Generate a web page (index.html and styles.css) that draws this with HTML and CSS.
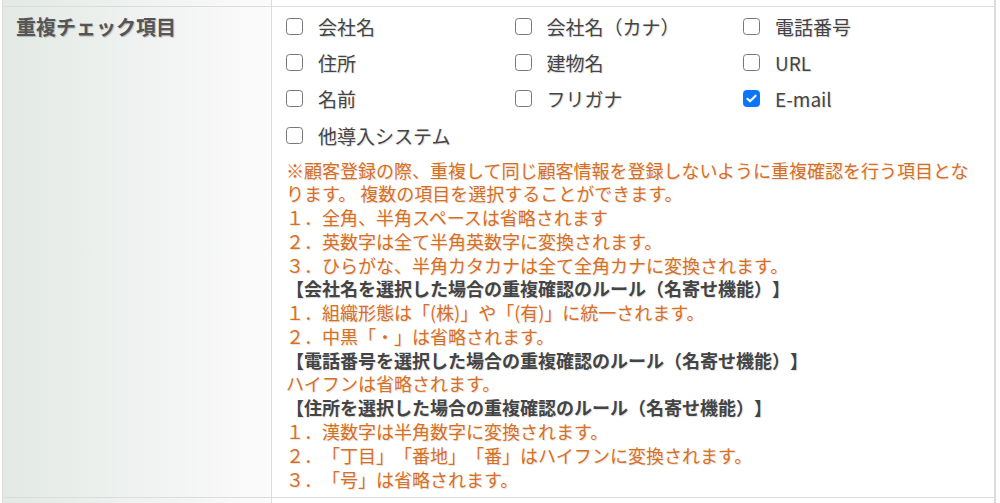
FILE: index.html
```html
<!DOCTYPE html>
<html lang="ja">
<head>
    <meta charset="UTF-8">
    <meta name="viewport" content="width=device-width, initial-scale=1.0">
    <title>重複チェック項目</title>
    <link rel="stylesheet" href="styles.css">
</head>
<body>

<div class="form">
    <div class="row row-edge row-prev">
        <div class="th"></div>
        <div class="td"></div>
    </div>

    <div class="row">
        <div class="th">重複チェック項目</div>
        <div class="td">
            <div class="checks">
                <label class="check"><input type="checkbox"><span class="box"></span><span>会社名</span></label>
                <label class="check"><input type="checkbox"><span class="box"></span><span>会社名（カナ）</span></label>
                <label class="check"><input type="checkbox"><span class="box"></span><span>電話番号</span></label>
                <label class="check"><input type="checkbox"><span class="box"></span><span>住所</span></label>
                <label class="check"><input type="checkbox"><span class="box"></span><span>建物名</span></label>
                <label class="check"><input type="checkbox"><span class="box"></span><span>URL</span></label>
                <label class="check"><input type="checkbox"><span class="box"></span><span>名前</span></label>
                <label class="check"><input type="checkbox"><span class="box"></span><span>フリガナ</span></label>
                <label class="check"><input type="checkbox" checked><span class="box"><svg viewBox="0 0 16 16" width="13" height="13"><path d="M3 8.4l3.2 3.1L13 4.6" fill="none" stroke="#fff" stroke-width="2.6" stroke-linecap="round" stroke-linejoin="round"/></svg></span><span>E-mail</span></label>
                <label class="check"><input type="checkbox"><span class="box"></span><span>他導入システム</span></label>
            </div>
            <div class="notes">
                <p>※顧客登録の際、重複して同じ顧客情報を登録しないように重複確認を行う項目となります。 複数の項目を選択することができます。</p>
                <p>１．全角、半角スペースは省略されます</p>
                <p>２．英数字は全て半角英数字に変換されます。</p>
                <p>３．ひらがな、半角カタカナは全て全角カナに変換されます。</p>
                <p class="rule">【会社名を選択した場合の重複確認のルール（名寄せ機能）】</p>
                <p>１．組織形態は「(株)」や「(有)」に統一されます。</p>
                <p>２．中黒「・」は省略されます。</p>
                <p class="rule">【電話番号を選択した場合の重複確認のルール（名寄せ機能）】</p>
                <p>ハイフンは省略されます。</p>
                <p class="rule">【住所を選択した場合の重複確認のルール（名寄せ機能）】</p>
                <p>１．漢数字は半角数字に変換されます。</p>
                <p>２．「丁目」「番地」「番」はハイフンに変換されます。</p>
                <p>３．「号」は省略されます。</p>
            </div>
        </div>
    </div>

    <div class="row row-edge">
        <div class="th"></div>
        <div class="td"></div>
    </div>
</div>

</body>
</html>
```

FILE: styles.css
```css
body {
    margin: 0;
    font-family: "Noto Sans CJK JP", "Noto Sans", sans-serif;
    background-color: #ffffff;
    color: #444444;
    overflow: hidden;
    text-spacing-trim: space-all;
}
.form {
    margin-left: 2px;
    width: 994px;
    box-sizing: border-box;
    border-left: 1px solid #dcdcdc;
    border-right: 2px solid #dcdcdc;
}
.row {
    display: grid;
    grid-template-columns: 269px 1fr;
    border-bottom: 1px solid #dcdcdc;
}
.row-edge {
    height: 6px;
}
.row-edge:last-child {
    height: 10px;
    border-bottom: none;
}
.th {
    border-right: 1px solid #dcdcdc;
    background: linear-gradient(to right, #e3e9e5, #fbfbfb);
    padding: 8px 13px;
    font-size: 20px;
    font-weight: bold;
    line-height: 24px;
    color: #555555;
    text-shadow: 1px 1px 1px rgba(0, 0, 0, 0.22);
}
.row-edge .th {
    padding: 0;
}
.td {
    padding: 1px 14px 6px 14px;
}
.row-edge .td {
    padding: 0;
}
.checks {
    display: grid;
    grid-template-columns: repeat(3, 228.5px);
    grid-auto-rows: 36.4px;
}
.check {
    display: flex;
    align-items: center;
    gap: 15px;
    font-size: 19px;
    color: #444444;
    text-shadow: 1px 1px 1px rgba(0, 0, 0, 0.15);
}
.check input {
    display: none;
}
.box {
    flex: none;
    width: 17px;
    height: 17px;
    box-sizing: border-box;
    border: 1.5px solid #777777;
    border-radius: 3.5px;
    background-color: #ffffff;
    display: flex;
    align-items: center;
    justify-content: center;
}
.check input:checked + .box {
    background-color: #0a75ff;
    border-color: #0a75ff;
}
.notes {
    margin-top: 5px;
    font-size: 18px;
    line-height: 23.76px;
    color: #d86f1e;
    text-shadow: 1px 1px 1px rgba(0, 0, 0, 0.12);
}
.notes p {
    margin: 0;
}
.notes .rule {
    font-weight: bold;
    color: #444444;
}
```
